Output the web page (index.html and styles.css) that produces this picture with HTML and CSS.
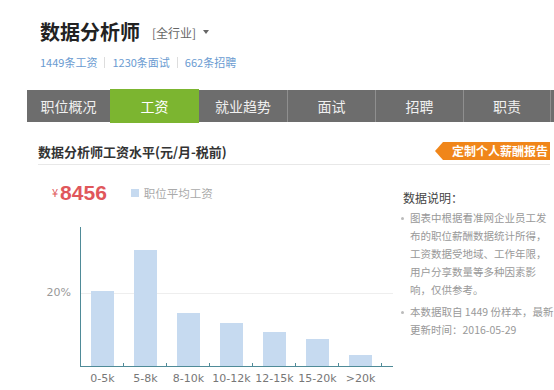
FILE: index.html
```html
<!DOCTYPE html>
<html lang="zh-CN">
<head>
    <meta charset="UTF-8">
    <title>数据分析师工资</title>
    <link rel="stylesheet" href="styles.css">
</head>
<body>

    <div class="job-head">
        <div class="job-title">
            <h1>数据分析师</h1>
            <span class="industry">[全行业]<i class="caret"></i></span>
        </div>
        <div class="job-links">
            <a href="#">1449条工资</a><span class="sep"></span>
            <a href="#">1230条面试</a><span class="sep"></span>
            <a href="#">662条招聘</a>
        </div>
    </div>

    <ul class="tabs">
        <li>职位概况</li>
        <li class="active">工资</li>
        <li>就业趋势</li>
        <li>面试</li>
        <li>招聘</li>
        <li>职责</li>
    </ul>

    <div class="salary">
        <div class="salary-head">
            <h2>数据分析师工资水平(元/月-税前)</h2>
            <a href="#" class="report-btn">定制个人薪酬报告</a>
        </div>

        <div class="salary-body">
            <div class="chart">
                <div class="avg">
                    <span class="yen">¥</span><span class="num">8456</span>
                    <span class="legend"><i></i>职位平均工资</span>
                </div>

                <div class="plot">
                    <span class="grid"></span>
                    <span class="ylabel">20%</span>
                    <!-- 柱高按比例计算 -->
                    <div class="bar" style="height:75px"></div>
                    <div class="bar" style="height:116px"></div>
                    <div class="bar" style="height:53px"></div>
                    <div class="bar" style="height:43px"></div>
                    <div class="bar" style="height:34px"></div>
                    <div class="bar" style="height:27px"></div>
                    <div class="bar" style="height:11px"></div>
                </div>

                <div class="xlabels">
                    <span>0-5k</span>
                    <span>5-8k</span>
                    <span>8-10k</span>
                    <span>10-12k</span>
                    <span>12-15k</span>
                    <span>15-20k</span>
                    <span>&gt;20k</span>
                </div>
            </div>

            <div class="notes">
                <h3>数据说明：</h3>
                <ul>
                    <li>图表中根据看准网企业员工发布的职位薪酬数据统计所得，工资数据受地域、工作年限，用户分享数量等多种因素影响，仅供参考。</li>
                    <li>本数据取自&nbsp;1449&nbsp;份样本，最新更新时间：2016-05-29</li>
                </ul>
            </div>
        </div>
    </div>

</body>
</html>
```

FILE: styles.css
```css
body {
    margin: 0;
    width: 554px;
    font-family: "Noto Sans CJK SC", "Liberation Sans", sans-serif;
    background: #fff;
    color: #333;
}

.job-head {
    padding: 17px 0 0 40px;
}

.job-title {
    display: flex;
    align-items: center;
    height: 30px;
}

.job-title h1 {
    margin: 0;
    font-size: 20px;
    font-weight: bold;
    color: #222;
    line-height: 30px;
}

.industry {
    margin-left: 12px;
    font-size: 12px;
    color: #666;
    display: flex;
    align-items: center;
}

.caret {
    margin-left: 7px;
    width: 0;
    height: 0;
    border-left: 3px solid transparent;
    border-right: 3px solid transparent;
    border-top: 4px solid #666;
}

.job-links {
    margin-top: 7px;
    display: flex;
    align-items: center;
    height: 16px;
    font-size: 11px;
}

.job-links a {
    color: #6a9bd1;
    text-decoration: none;
}

.job-links .sep {
    width: 1px;
    height: 11px;
    background: #ddd;
    margin: 0 7px;
}

.tabs {
    list-style: none;
    margin: 20px 0 0 27px;
    padding: 0;
    display: flex;
    height: 32px;
    background: #6d6d6d;
}

.tabs li {
    box-sizing: border-box;
    width: 88px;
    line-height: 32px;
    text-align: center;
    font-size: 14px;
    color: #f0f0f0;
}

.tabs li:first-child {
    width: 83px;
}

.tabs li:nth-child(n+4) {
    border-left: 1px solid #8f8f8f;
}

.tabs li:last-child {
    border-right: 1px solid #8f8f8f;
}

.tabs li.active {
    width: 89px;
    height: 34px;
    margin-top: -1px;
    line-height: 34px;
    background: #7cb530;
    color: #fff;
}

.salary {
    padding-left: 38px;
}

.salary-head {
    width: 512px;
    margin-top: 19px;
    height: 20px;
    padding-bottom: 3px;
    border-bottom: 1px solid #e8e8e8;
    display: flex;
    align-items: center;
    justify-content: space-between;
}

.salary-head h2 {
    margin: 0;
    font-size: 13px;
    font-weight: bold;
    color: #333;
}

.report-btn {
    position: relative;
    height: 18px;
    line-height: 18px;
    padding: 0 2px 0 9px;
    background: #f0861a;
    color: #fff;
    font-size: 12px;
    font-weight: bold;
    text-decoration: none;
}

.report-btn::before {
    content: "";
    position: absolute;
    left: -8px;
    top: 0;
    border-top: 9px solid transparent;
    border-bottom: 9px solid transparent;
    border-right: 8px solid #f0861a;
}

.salary-body {
    display: flex;
}

.chart {
    width: 354px;
}

.avg {
    margin-top: 16px;
    height: 24px;
    padding-left: 14px;
    display: flex;
    align-items: center;
}

.yen {
    font-size: 11px;
    color: #e0575b;
    align-self: flex-start;
    margin-top: 3px;
    margin-right: 2px;
}

.num {
    font-family: "Liberation Sans", sans-serif;
    font-size: 21px;
    font-weight: bold;
    color: #e0575b;
}

.legend {
    margin-left: 24px;
    display: flex;
    align-items: center;
    font-size: 11.5px;
    color: #aaa;
}

.legend i {
    width: 8px;
    height: 8px;
    background: #c6daf0;
    margin-right: 5px;
}

.plot {
    position: relative;
    margin: 22px 0 0 42px;
    width: 302px;
    height: 139px;
    border-left: 1px solid #4f8b98;
    border-bottom: 1px solid #4f8b98;
    display: flex;
    align-items: flex-end;
    gap: 20px;
    padding-left: 10px;
    box-sizing: content-box;
}

.plot .grid {
    position: absolute;
    left: 0;
    right: 0;
    top: 66px;
    height: 1px;
    background: #eee;
}

.plot .ylabel {
    position: absolute;
    right: calc(100% + 10px);
    top: 59px;
    line-height: 14px;
    font-family: "DejaVu Sans", sans-serif;
    font-size: 11px;
    color: #999;
}

.bar {
    position: relative;
    width: 23px;
    background: #c6daf0;
}

.bar::after {
    content: "";
    position: absolute;
    left: 32px;
    bottom: 0;
    width: 1px;
    height: 3px;
    background: #4f8b98;
}

.xlabels {
    margin: 5px 0 0 43px;
    display: flex;
}

.xlabels span {
    width: 43px;
    text-align: center;
    line-height: 14px;
    font-family: "DejaVu Sans", sans-serif;
    font-size: 11px;
    color: #777;
    white-space: nowrap;
}

.notes {
    flex: 1;
}

.notes h3 {
    margin: 24px 0 0 11px;
    font-size: 12px;
    font-weight: normal;
    line-height: 18px;
    color: #444;
}

.notes ul {
    list-style: none;
    margin: 2px 0 0;
    padding: 0;
}

.notes li {
    position: relative;
    padding-left: 18px;
    font-size: 10.5px;
    line-height: 18px;
    color: #999;
}

.notes li + li {
    margin-top: 4px;
}

.notes li::before {
    content: "";
    position: absolute;
    left: 9px;
    top: 8px;
    width: 3px;
    height: 3px;
    border-radius: 50%;
    background: #bbb;
}
```
